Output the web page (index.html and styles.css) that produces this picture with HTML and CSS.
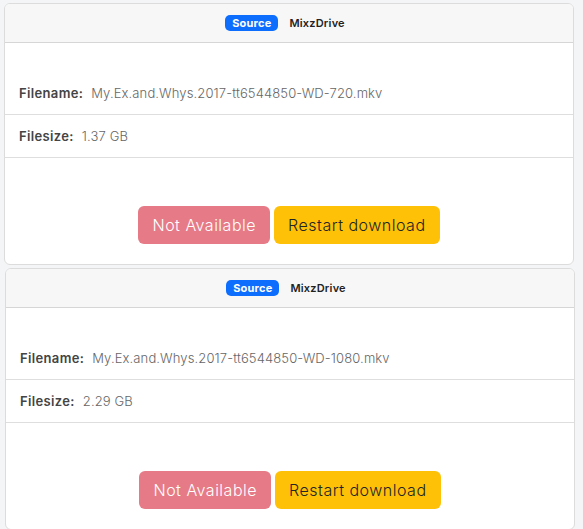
FILE: index.html
```html
<!DOCTYPE html>
<html lang="en">
<head>
<meta charset="utf-8">
<title>Downloads</title>
<link rel="stylesheet" href="styles.css">
</head>
<body>
<div class="stack">
  <section class="card card-first">
    <header class="card-head">
      <span class="badge">Source</span>
      <span class="host">MixzDrive</span>
    </header>
    <div class="card-body">
      <div class="row"><span class="label">Filename:</span><span class="value">My.Ex.and.Whys.2017-tt6544850-WD-720.mkv</span></div>
      <div class="row"><span class="label">Filesize:</span><span class="value">1.37 GB</span></div>
      <div class="actions">
        <button class="btn btn-off" disabled>Not Available</button>
        <button class="btn btn-warn">Restart download</button>
      </div>
    </div>
  </section>
  <section class="card card-second">
    <header class="card-head">
      <span class="badge">Source</span>
      <span class="host">MixzDrive</span>
    </header>
    <div class="card-body">
      <div class="row"><span class="label">Filename:</span><span class="value">My.Ex.and.Whys.2017-tt6544850-WD-1080.mkv</span></div>
      <div class="row"><span class="label">Filesize:</span><span class="value">2.29 GB</span></div>
      <div class="actions">
        <button class="btn btn-off" disabled>Not Available</button>
        <button class="btn btn-warn">Restart download</button>
      </div>
    </div>
  </section>
</div>
</body>
</html>
```
FILE: styles.css
```css
* { box-sizing: border-box; }

html, body {
  margin: 0;
  background: #f4f5f7;
}

body {
  font-family: Inter, "Noto Sans", sans-serif;
  color: #333;
}

.stack {
  display: flex;
  flex-direction: column;
  gap: 3px;
  padding-top: 3px;
}

.card {
  background: #fff;
  border: 1px solid #dcdcdc;
  border-radius: 6px;
  overflow: hidden;
}

.card-first { margin: 0 9px 0 4px; }
.card-second { margin: 0 8px 0 5px; }

.card-head {
  height: 39px;
  background: #f7f7f7;
  border-bottom: 1px solid #d6d6d6;
  display: flex;
  align-items: center;
  justify-content: center;
  gap: 11px;
  padding-right: 8px;
}

.badge {
  background: #0d6efd;
  color: #fff;
  font-size: 11px;
  font-weight: 700;
  line-height: 16px;
  padding: 0 7px;
  border-radius: 5px;
  letter-spacing: 0.2px;
}

.host {
  font-size: 11px;
  font-weight: 600;
  color: #222;
  letter-spacing: 0.2px;
}

.card-body {
  padding-top: 29px;
}

.row {
  height: 43px;
  display: flex;
  align-items: center;
  padding-left: 14px;
  border-bottom: 1px solid #dedede;
  font-size: 13px;
}

.label {
  font-weight: 600;
  color: #444;
  margin-right: 8px;
  letter-spacing: 0.35px;
}

.value {
  font-weight: 300;
  color: #666;
  letter-spacing: 0.12px;
}

.actions {
  display: flex;
  justify-content: center;
  gap: 4px;
  padding: 48px 0 20px 0;
}

.btn {
  font-family: inherit;
  font-size: 16px;
  font-weight: 300;
  line-height: 24px;
  padding: 6px 13px;
  border: 1px solid transparent;
  border-radius: 6px;
  letter-spacing: 0.5px;
}

.btn-off {
  background: #e67a86;
  color: #fff;
}

.btn-warn {
  background: #ffc107;
  color: #212529;
}
```
